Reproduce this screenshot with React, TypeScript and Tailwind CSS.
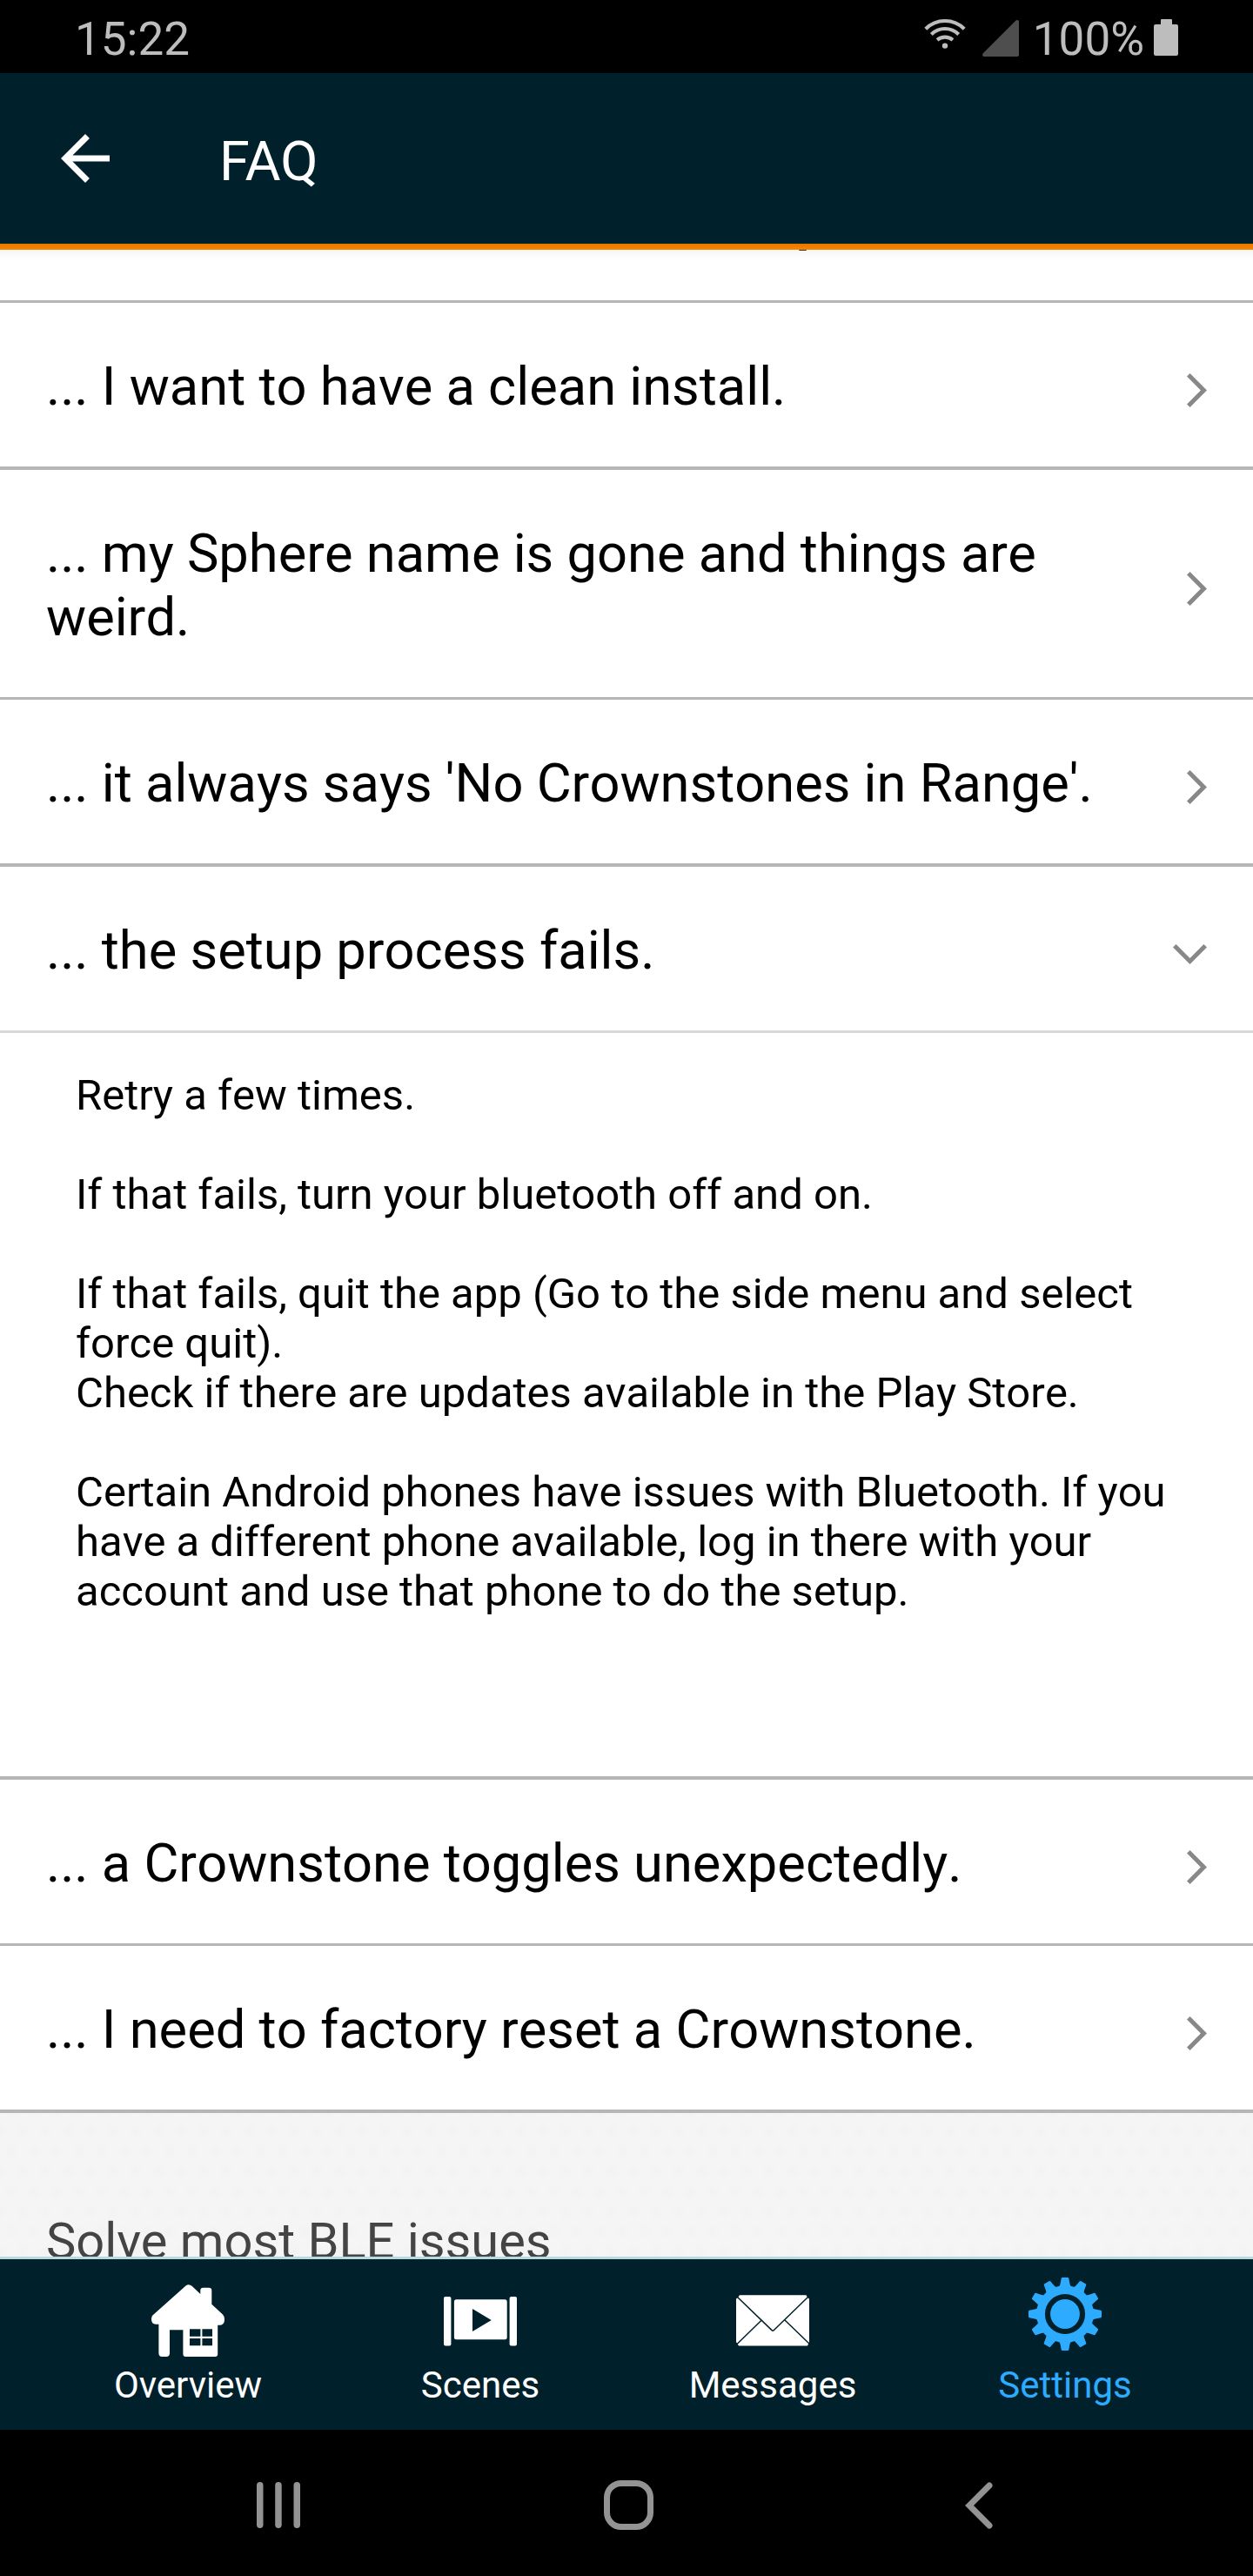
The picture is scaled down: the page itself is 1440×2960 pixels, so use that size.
import React from "react";

type Row = { text: string; box: string; open?: boolean };

const topRows: Row[] = [
  { text: "... I want to have a clean install.", box: "h-[192px] border-b-4" },
  { text: "... my Sphere name is gone and things are weird.", box: "h-[264px] border-b-3" },
  { text: "... it always says 'No Crownstones in Range'.", box: "h-[192px] border-b-4" },
];

const bottomRows: Row[] = [
  { text: "... a Crownstone toggles unexpectedly.", box: "h-[191px] border-b-3" },
  { text: "... I need to factory reset a Crownstone.", box: "h-[192px] border-b-4" },
];

function Chevron({ down }: { down?: boolean }) {
  return down ? (
    <svg width="39" height="23" viewBox="0 0 39 23" className="mt-3" fill="#888888">
      <path d="M0 3.6 3.6 0 19.5 15.9 35.4 0 39 3.6 19.5 23z" />
    </svg>
  ) : (
    <svg width="23" height="39" viewBox="0 0 23 39" className="mt-3" fill="#888888">
      <path d="M3.6 0 0 3.6 15.9 19.5 0 35.4 3.6 39 23 19.5z" />
    </svg>
  );
}

function FaqRow({ text, box, open }: Row) {
  return (
    <div
      className={`flex shrink-0 items-center justify-between bg-white pl-[53px] pr-[53px] ${
        open ? "border-[#d8d8d8]" : "border-[#b6b6b6]"
      } ${box}`}
    >
      <p className="mt-[5px] w-[1250px] text-[61.4px] leading-[73px] text-black [font-kerning:none]">{text}</p>
      <Chevron down={open} />
    </div>
  );
}

function HouseIcon() {
  return (
    <svg width="84" height="84" viewBox="0 0 84 84" fill="#fff">
      <path
        fillRule="evenodd"
        d="M39.5 1.5Q43 -1.2 46.5 1.8L56.3 11V7Q56.3 3.7 59.5 3.7H66Q69.3 3.7 69.3 7V22.7L82 34.5Q84 36.5 84 40Q84 46.7 78.5 46.7H76.2V80Q76.2 83 73.2 83H39.4Q36.4 83 36.4 80V52.3H21V79Q21 83 17 83H12.4Q8.4 83 8.4 79V45.7H5Q0 45.7 0 40Q0 36 2.5 34.5zM44 51.3V59.7H56.4V51.3zM58.4 51.3V59.7H70V51.3zM44 62V70.3H56.4V62zM58.4 62V70.3H70V62z"
      />
    </svg>
  );
}

function ScenesIcon() {
  return (
    <svg width="84" height="57" viewBox="0 0 84 57" fill="#fff">
      <rect width="8.4" height="56.5" rx="2" />
      <rect x="75.6" width="8.4" height="56.5" rx="2" />
      <path
        fillRule="evenodd"
        d="M14.4 3.3H70.2Q72.7 3.3 72.7 5.8V46.8Q72.7 49.3 70.2 49.3H14.4Q11.9 49.3 11.9 46.8V5.8Q11.9 3.3 14.4 3.3zM33 14V40L54.7 27z"
      />
    </svg>
  );
}

function EnvelopeIcon() {
  return (
    <svg width="84" height="59" viewBox="0 0 84 59">
      <path fill="#fff" d="M4 .3H80.5L82 3 84 4.5V54L82 58.5H3L0 54V4.5L2 3z" />
      <path
        fill="none"
        stroke="#00212b"
        strokeWidth="1.5"
        d="M0 1 2 3 40.8 40.4Q42.1 41.8 43.4 40.4L82 3 84 1M29 29.3 0 57.5M56 29 84 56"
      />
    </svg>
  );
}

const teeth = [0, 30, 60, 90, 120, 150, 180, 210, 240, 270, 300, 330];

function GearIcon() {
  return (
    <svg width="84" height="84" viewBox="-42 -42 84 84" fill="#2dabff">
      <circle r="33" />
      {teeth.map((angle) => (
        <path
          key={angle}
          transform={`rotate(${angle})`}
          d="M-7.5 -30Q-5.6 -33 -5.2 -36L-4.3 -41.2Q-4 -42 -3 -42H3Q4 -42 4.3 -41.2L5.2 -36Q5.6 -33 7.5 -30z"
        />
      ))}
      <circle r="20" fill="none" stroke="#00212b" strokeWidth="6.2" />
    </svg>
  );
}

function Tab({ label, icon, active, lift }: { label: string; icon: React.ReactNode; active?: boolean; lift: string }) {
  return (
    <div className="flex w-[336px] flex-col items-center">
      <div className={`flex h-[84px] items-center ${lift}`}>{icon}</div>
      <span className={`text-[42px] leading-[50px] ${active ? "text-[#2dabff]" : "text-white"}`}>{label}</span>
    </div>
  );
}

export default function App() {
  return (
    <div className="flex h-[2960px] w-[1440px] flex-col overflow-hidden bg-black font-[Roboto,sans-serif]">
      <div className="flex h-[84px] shrink-0 items-center justify-between pl-[86px] pr-[86px] text-[53px] leading-[62px] text-[#bdbdbd]">
        <span className="mt-[5px]">15:22</span>
        <div className="flex items-center">
          <svg width="48" height="36" viewBox="0 0 48 36" className="mr-[19px] mb-[6px]" fill="none" stroke="#bdbdbd" strokeWidth="4.2">
            <path d="M1.8 12.2Q11 3 24 3T46.2 12.2M8.3 18.4Q15 12 24 12T39.7 18.4M15 24.8Q19 21.7 24 21.7T33 24.8" />
            <circle cx="24" cy="31.6" r="3.2" fill="#bdbdbd" stroke="none" />
          </svg>
          <svg width="42" height="42" viewBox="0 0 42 42" className="mr-[16px] mt-[4px]" fill="#4e4e4e">
            <path d="M38 1Q39 0 40 0 42 0 42 2V40Q42 42 40 42H2Q0 42 0 40 0 39.3 1 38z" />
          </svg>
          <span className="mt-[5px]">100%</span>
          <svg width="28" height="42" viewBox="0 0 28 42" className="ml-[11px] mt-[2px]" fill="#bdbdbd">
            <path d="M8 1Q8 0 9 0H20Q21 0 21 1V6H26Q28 6 28 8V40Q28 42 26 42H2Q0 42 0 40V8Q0 6 2 6H8z" />
          </svg>
        </div>
      </div>

      <header className="flex h-[196px] shrink-0 items-center bg-[#00212b] pl-14">
        <svg width="84" height="84" viewBox="0 0 24 24" fill="#fff">
          <path d="M20 11H7.83l5.59-5.59L12 4l-8 8 8 8 1.41-1.41L7.83 13H20v-2z" />
        </svg>
        <h1 className="ml-[112px] mt-[7px] text-[63px] leading-[74px] text-white">FAQ</h1>
      </header>
      <div className="h-[7px] shrink-0 bg-linear-to-b from-[#e67600] to-[#fa8500]" />

      <main className="flex min-h-0 flex-1 flex-col overflow-hidden bg-[#f5f5f5] bg-[radial-gradient(circle,#f2f2f2_0,#f2f2f200_9px),radial-gradient(circle,#f2f2f2_0,#f2f2f200_9px)] bg-[size:26px_46px] bg-[position:0_0,13px_23px]">
        <div className="h-[61px] shrink-0 border-b-3 border-[#b6b6b6] bg-white bg-linear-to-b from-[#f6f6f6] to-white to-[12px]">
          <div className="ml-[918px] h-px w-[9px] rounded-b-full bg-[#333]" />
        </div>
        {topRows.map((row) => (
          <FaqRow key={row.text} {...row} />
        ))}
        <FaqRow text="... the setup process fails." box="h-[191px] border-b-3" open />
        <div className="h-[858px] shrink-0 border-b-4 border-[#b6b6b6] bg-white pl-[87px] pt-[43px] text-[49px] leading-[57px] text-black [font-kerning:none]">
          <p>Retry a few times.</p>
          <p className="mt-[57px]">If that fails, turn your bluetooth off and on.</p>
          <p className="mt-[57px] w-[1270px]">If that fails, quit the app (Go to the side menu and select force quit).</p>
          <p>Check if there are updates available in the Play Store.</p>
          <p className="mt-[57px] w-[1270px]">
            Certain Android phones have issues with Bluetooth. If you have a different phone available, log in there with your
            account and use that phone to do the setup.
          </p>
        </div>
        {bottomRows.map((row) => (
          <FaqRow key={row.text} {...row} />
        ))}
        <h2 className="mt-[114px] shrink-0 pl-[53px] text-[57.75px] leading-[66px] text-[#444]">Solve most BLE issues</h2>
      </main>

      <nav className="flex h-[199px] shrink-0 justify-center border-t-3 border-[#b8dbe0] bg-[#00212b]">
        <Tab label="Overview" icon={<HouseIcon />} lift="mt-[29px] mb-[7px]" />
        <Tab label="Scenes" icon={<ScenesIcon />} lift="mt-[29px] mb-[7px]" />
        <Tab label="Messages" icon={<EnvelopeIcon />} lift="mt-[28px] mb-[8px]" />
        <Tab label="Settings" icon={<GearIcon />} lift="mt-[21px] mb-[15px]" active />
      </nav>

      <div className="flex h-[168px] shrink-0 items-center pt-[5px]">
        <svg width="50" height="53" viewBox="0 0 50 53" className="ml-[295px]" fill="#939393">
          <rect width="7.5" height="53" rx="3.7" />
          <rect x="21.2" width="7.5" height="53" rx="3.7" />
          <rect x="42.5" width="7.5" height="53" rx="3.7" />
        </svg>
        <div className="ml-[349px] size-[57px] rounded-[20px] border-7 border-[#939393]" />
        <svg width="32" height="54" viewBox="0 0 32 54" className="ml-[358px]" fill="none" stroke="#939393" strokeWidth="7">
          <path strokeLinecap="round" d="M28 4 5 27 28 50" />
        </svg>
      </div>
    </div>
  );
}
